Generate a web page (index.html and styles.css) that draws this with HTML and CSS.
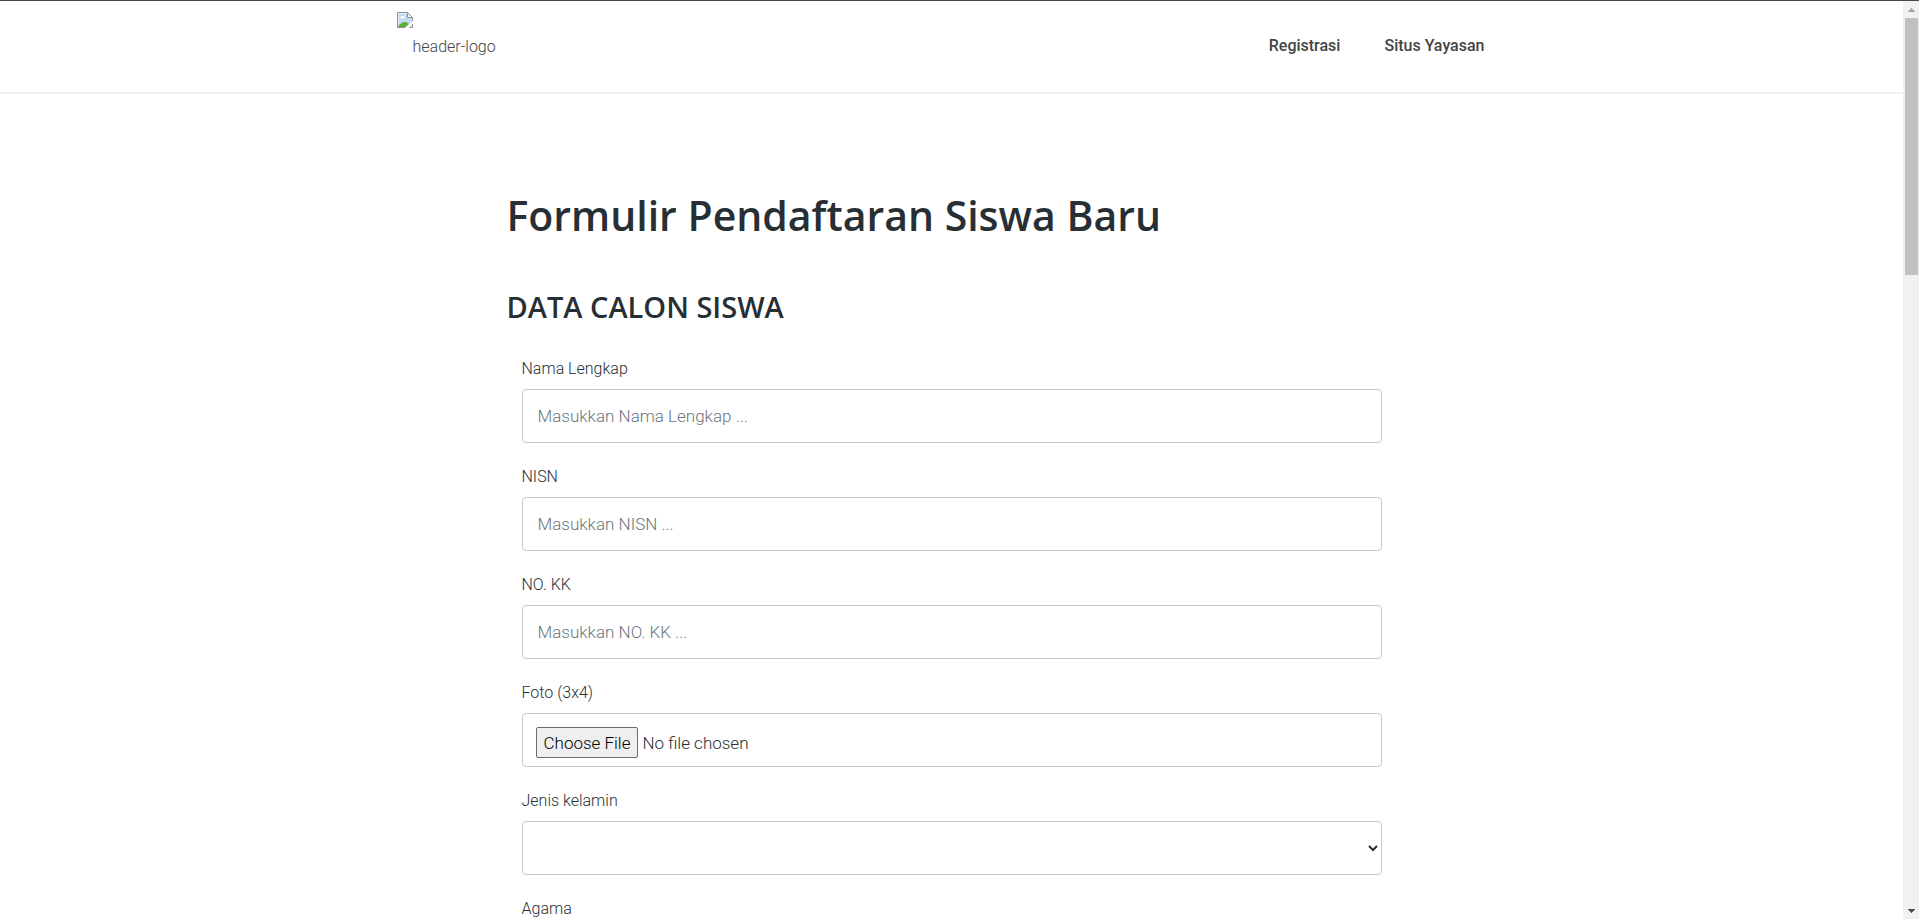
FILE: index.html
```html
<!DOCTYPE html>
<html lang="id">
<head>
<meta charset="utf-8">
<title>Formulir Pendaftaran Siswa Baru</title>
<link rel="stylesheet" href="styles.css">
</head>
<body>
<div class="page">
  <header class="header">
    <div class="header-inner">
      <a class="logo" href="#">
        <svg class="logo-icon" viewBox="0 0 16 16" width="16" height="16" aria-hidden="true">
          <path d="M.5.5h10l5 5v10H.5z" fill="#fff"/>
          <path d="M1.500 1.500h9v4.500H15v8.500H1.500z" fill="#c3dcf5"/>
          <path d="M3 6.200c0-1.200 1-1.600 1.700-1.400C5 3.700 7.200 3.600 7.500 5c1 0 1.200 1.200.4 1.200z" fill="#fff"/>
          <path d="M1.500 15v-1.500C4 11 6 10 7.500 10S10.500 10.500 12 12l-3 3z" fill="#5fae36"/>
          <path d="M8.500 15.500L16 8.500v2.500l-4.500 4.500z" fill="#fff"/>
          <path d="M8 15.500H.5V.5h10l5 5V9M10.500.5v5h5M15.500 12v3.500H12.500" fill="none" stroke="#8f8f8f"/>
        </svg>
        <span class="logo-text">header-logo</span>
      </a>
      <nav class="nav">
        <a href="#">Registrasi</a>
        <a href="#">Situs Yayasan</a>
      </nav>
    </div>
  </header>
  <main class="content">
    <h1>Formulir Pendaftaran Siswa Baru</h1>
    <h2>DATA CALON SISWA</h2>
    <form class="form">
      <div class="field"><label for="nama">Nama Lengkap</label><input class="control" id="nama" type="text" placeholder="Masukkan Nama Lengkap ..."></div>
      <div class="field"><label for="nisn">NISN</label><input class="control" id="nisn" type="text" placeholder="Masukkan NISN ..."></div>
      <div class="field"><label for="kk">NO. KK</label><input class="control" id="kk" type="text" placeholder="Masukkan NO. KK ..."></div>
      <div class="field"><label for="foto">Foto (3x4)</label><input class="control control-file" id="foto" type="file"></div>
      <div class="field"><label for="kelamin">Jenis kelamin</label><select class="control control-select" id="kelamin"><option></option><option>Laki-laki</option><option>Perempuan</option></select></div>
      <div class="field"><label for="agama">Agama</label><select class="control control-select" id="agama"><option></option></select></div>
    </form>
  </main>
</div>
<div class="scrollbar" aria-hidden="true">
  <svg viewBox="0 0 16 16" width="16" height="16"><path d="M8 7h1v1h1v1h1v1h1v1H5v-1h1V9h1V8h1z" fill="#a3a3a3"/></svg>
  <div class="track"><div class="thumb"></div></div>
  <svg viewBox="0 0 16 16" width="16" height="16"><path d="M5 6h7v1h-1v1h-1v1H9v1H8V9H7V8H6V7H5z" fill="#505050"/></svg>
</div>
</body>
</html>
```

FILE: styles.css
```css
* { box-sizing: border-box; }

body {
  display: flex;
  height: 100vh;
  margin: 0;
  overflow: hidden;
  border-top: 1px solid #474747;
  background: #fff;
  color: #272f34;
  font: 300 16px/30px Roboto, "Open Sans", sans-serif;
}

.page {
  flex: 1;
  min-width: 0;
  overflow: hidden;
}

.header { border-bottom: 2px solid #f1f1f1; }

.header-inner {
  display: flex;
  justify-content: space-between;
  max-width: 1140px;
  min-height: 91px;
  margin: 0 auto;
  padding: 11px 37px 11px 15px;
}

.logo {
  display: flex;
  color: #444;
  text-decoration: none;
}

.logo-text { margin-top: 20px; }

.nav {
  display: flex;
  align-items: center;
  gap: 44px;
  padding-bottom: 2px;
}

.nav a {
  color: #444;
  font-weight: 500;
  text-decoration: none;
}

.content {
  max-width: 890px;
  margin: 0 auto;
  padding-top: 91px;
}

h1, h2 {
  margin: 0;
  font-family: "Open Sans", "Noto Sans", sans-serif;
  font-weight: 600;
}

h1 {
  margin-bottom: 44px;
  font-size: 41px;
  line-height: 60px;
}

h2 {
  margin-bottom: 29px;
  font-size: 29px;
  line-height: 36px;
}

.form { padding: 0 15px; }

.field { margin-bottom: 19px; }

.field label {
  display: block;
  margin-bottom: 5px;
}

.control {
  display: block;
  width: 100%;
  height: 54px;
  padding: 0 15px;
  border: 1px solid #c8c8c8;
  border-radius: 4px;
  background: #fff;
  color: #272f34;
  font: 300 17px/30px Roboto, "Open Sans", sans-serif;
}

.control::placeholder { color: #6c757d; opacity: 1; }

.control-file { padding: 13px; }

.control-file::file-selector-button {
  height: 31px;
  padding: 0 7px;
  border: 1px solid #6b6b6b;
  border-radius: 2px;
  background: #efefef;
  color: #000;
  font: inherit;
  line-height: 28px;
}

.control-select { padding: 0 1px 0 0; }

.scrollbar {
  display: flex;
  flex-direction: column;
  width: 16px;
  background: #f1f1f1;
}

.track {
  flex: 1;
  padding: 1px 1px 0 2px;
}

.thumb {
  height: 29%;
  background: #c1c1c1;
}
```
